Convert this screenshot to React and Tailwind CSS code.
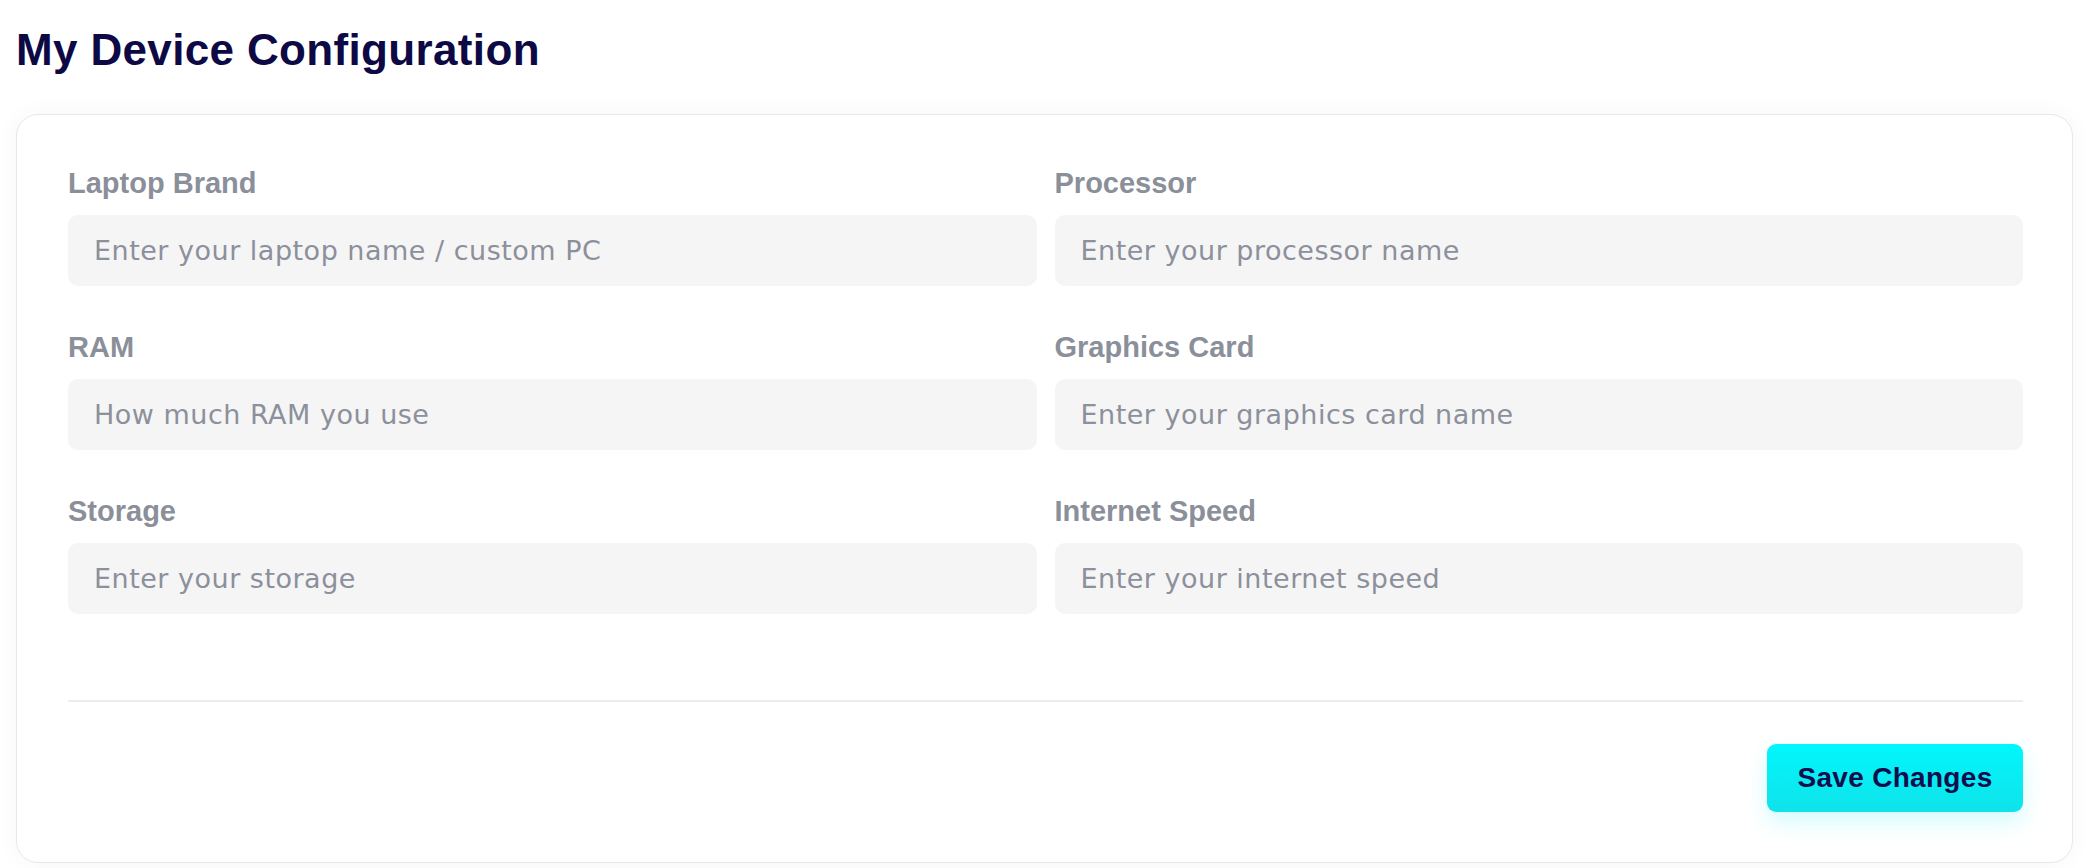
import React from 'react';

const fields = [
    { label: 'Laptop Brand', placeholder: 'Enter your laptop name / custom PC' },
    { label: 'Processor', placeholder: 'Enter your processor name' },
    { label: 'RAM', placeholder: 'How much RAM you use' },
    { label: 'Graphics Card', placeholder: 'Enter your graphics card name' },
    { label: 'Storage', placeholder: 'Enter your storage' },
    { label: 'Internet Speed', placeholder: 'Enter your internet speed' },
];

function Field({ label, placeholder }) {
    return (
        <div className="flex flex-col">
            <label className="font-['Liberation_Sans',sans-serif] font-bold text-[29px] leading-[35px] text-[#8b8f9a] mb-[14px]">{label}</label>
            <input
                type="text"
                placeholder={placeholder}
                className="h-[71px] w-full rounded-[10px] bg-[#f5f5f6] px-[26px] font-['DejaVu_Sans',sans-serif] text-[27px] tracking-[0.5px] text-[#4b4f5c] placeholder:text-[#8c909b] outline-none"
            />
        </div>
    );
}

export default function App() {
    return (
        <div className="min-h-screen bg-white pb-[5px]">
            <h1 className="pt-[23px] pl-4 font-['Liberation_Sans',sans-serif] font-bold text-[44px] leading-[53px] tracking-[0.35px] text-[#0d0944] mb-[38px]">
                My Device Configuration
            </h1>
            <div className="ml-4 mr-[15px] rounded-[22px] border border-[#e8e8eb] bg-white pt-[51px] pb-[50px] pl-[51px] pr-[49px] shadow-[0_0_24px_rgba(0,0,0,0.04)]">
                <div className="grid grid-cols-2 gap-x-[18px] gap-y-[44px]">
                    {fields.map((f) => <Field key={f.label} label={f.label} placeholder={f.placeholder} />)}
                </div>
                <div className="mt-[86px] h-[2px] bg-[#ededef]"></div>
                <div className="mt-[42px] flex justify-end">
                    <button className="h-[68px] w-[256px] rounded-[9px] bg-gradient-to-b from-[#00f7fc] to-[#0fe2ea] font-['Liberation_Sans',sans-serif] font-bold text-[28px] tracking-[0.3px] text-[#120d4d] shadow-[0_10px_22px_rgba(0,235,245,0.18)]">
                        Save Changes
                    </button>
                </div>
            </div>
        </div>
    );
}
